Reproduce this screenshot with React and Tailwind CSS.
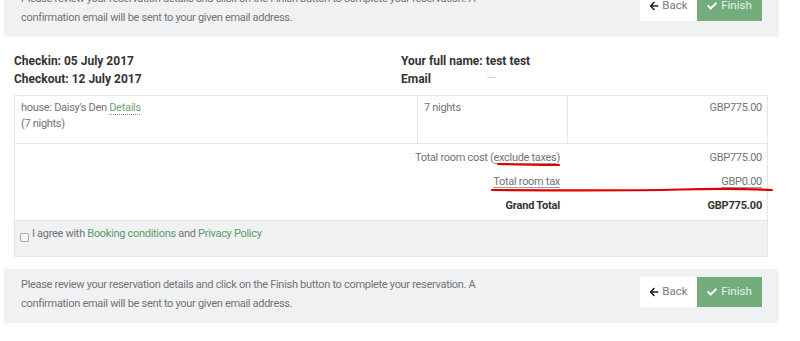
import React from "react";
import { FaArrowLeft, FaCheck } from "react-icons/fa";

function Panel({ className = "" }) {
  return (
    <div className={`ml-[4px] w-[775px] h-[54px] bg-[#f0f1f3] flex items-start justify-between pl-[17px] pr-[17px] ${className}`}>
      <p className="pt-[7px] text-[11px] tracking-[-0.3px] leading-[18.5px] text-[#737373] w-[480px]">
        Please review your reservation details and click on the Finish button to complete your reservation. A confirmation email will be sent to your given email address.
      </p>
      <div className="flex mt-[8px] h-[30px]">
        <button className="w-[57px] h-[30px] bg-white flex items-center justify-center gap-[3px] text-[11.5px] text-[#7a7a7a]">
          <FaArrowLeft className="w-[10px] h-[10px] text-[#222]" />
          <span>Back</span>
        </button>
        <button className="w-[65px] h-[30px] bg-[#72ad7b] flex items-center justify-center gap-[4px] text-[11.5px] text-[#e8f3ea]">
          <FaCheck className="w-[10px] h-[10px] text-white" />
          <span>Finish</span>
        </button>
      </div>
    </div>
  );
}

export default function App() {
  return (
    <div className="w-[800px] h-[341px] overflow-hidden bg-white relative" style={{ fontFamily: "Roboto, 'Liberation Sans', sans-serif" }}>
      <Panel className="mt-[-17px]" />

      <div className="mx-[14px] mt-[15px] grid grid-cols-[387px_1fr] text-[12px] font-bold text-[#333] leading-[18px]">
        <div>
          <div>Checkin: 05 July 2017</div>
          <div>Checkout: 12 July 2017</div>
        </div>
        <div>
          <div>Your full name: test test</div>
          <div className="flex items-center">
            <span>Email</span>
            <span className="ml-[56px] mt-[-4px] w-[8px] h-[1px] bg-[#ccc]"></span>
          </div>
        </div>
      </div>

      <div className="mx-[14px] mt-[7px] w-[754px] border border-[#e6e6e6] text-[11px] tracking-[-0.3px] text-[#737373]">
        <div className="grid grid-cols-[402px_150px_1fr] h-[48px] border-b border-[#e6e6e6]">
          <div className="pl-[6px] pt-[4px] leading-[16px]">
            <div>
              house: Daisy's Den{" "}
              <span className="text-[#6ea37a] underline decoration-dotted decoration-[#6ea37a] underline-offset-[3px]">Details</span>
            </div>
            <div>(7 nights)</div>
          </div>
          <div className="border-l border-[#e6e6e6] pl-[6px] pt-[4px] leading-[16px]">7 nights</div>
          <div className="border-l border-[#e6e6e6] pr-[5px] pt-[4px] leading-[16px] text-right">GBP775.00</div>
        </div>
        <div className="grid grid-cols-[546px_1fr] h-[76px] pt-[2px]">
          <div className="text-right pr-[1px] leading-[24px]">
            <div className="h-[24px]">
              Total room cost (<span className="underline decoration-[#999] underline-offset-[2px]">exclude taxes</span>)
            </div>
            <div className="h-[24px]">
              <span className="underline decoration-[#999] underline-offset-[2px]">Total room tax</span>
            </div>
            <div className="h-[25px] font-bold text-[#333] text-[11px] tracking-[-0.2px]">Grand Total</div>
          </div>
          <div className="text-right pr-[5px] leading-[24px]">
            <div className="h-[24px]">GBP775.00</div>
            <div className="h-[24px]">
              <span className="underline decoration-[#999] underline-offset-[2px]">GBP0.00</span>
            </div>
            <div className="h-[25px] font-bold text-[#333] text-[11px] tracking-[-0.2px]">GBP775.00</div>
          </div>
        </div>
        <div className="h-[36px] bg-[#f0f1f3] border-t border-[#e6e6e6] flex items-start pt-[5px] pl-[5px] gap-[3px]">
          <span className="mt-[7px] w-[9px] h-[9px] border border-[#aaa] bg-[#f7f7f7] rounded-[1px]"></span>
          <span className="leading-[16px]">
            I agree with <span className="text-[#5e9a69]">Booking conditions</span> and{" "}
            <span className="text-[#5e9a69]">Privacy Policy</span>
          </span>
        </div>
      </div>

      <Panel className="mt-[12px]" />

      <svg className="absolute left-0 top-0 pointer-events-none" width="800" height="341" viewBox="0 0 800 341">
        <path d="M498 164 C 520 164.5, 540 165, 559 165" stroke="#e10000" strokeWidth="2.2" fill="none" strokeLinecap="round" />
        <path d="M492 190 C 560 190.5, 640 190.5, 680 189.5 C 720 188.5, 750 189, 772 190" stroke="#e10000" strokeWidth="2.2" fill="none" strokeLinecap="round" />
      </svg>
    </div>
  );
}
